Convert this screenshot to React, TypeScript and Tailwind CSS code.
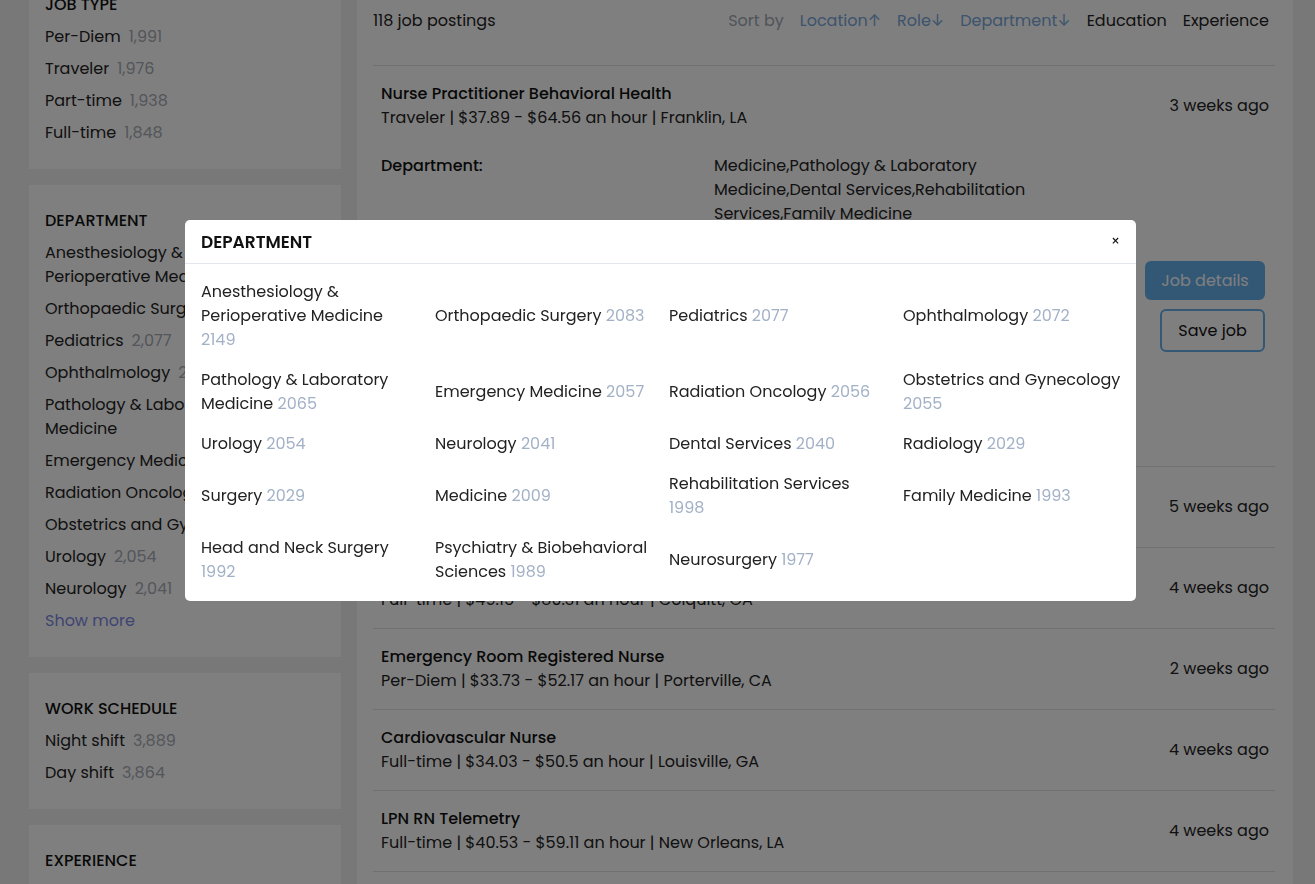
const jobTypes = [
  ['Per-Diem', '1,991'],
  ['Traveler', '1,976'],
  ['Part-time', '1,938'],
  ['Full-time', '1,848'],
]

const sideDepartments = [
  ['Anesthesiology & Perioperative Medicine', '2,149'],
  ['Orthopaedic Surgery', '2,083'],
  ['Pediatrics', '2,077'],
  ['Ophthalmology', '2,072'],
  ['Pathology & Laboratory Medicine', '2,065'],
  ['Emergency Medicine', '2,057'],
  ['Radiation Oncology', '2,056'],
  ['Obstetrics and Gynecology', '2,055'],
  ['Urology', '2,054'],
  ['Neurology', '2,041'],
]

const schedules = [
  ['Night shift', '3,889'],
  ['Day shift', '3,864'],
]

const modalDepartments = [
  ['Anesthesiology & Perioperative Medicine', '2149'],
  ['Orthopaedic Surgery', '2083'],
  ['Pediatrics', '2077'],
  ['Ophthalmology', '2072'],
  ['Pathology & Laboratory Medicine', '2065'],
  ['Emergency Medicine', '2057'],
  ['Radiation Oncology', '2056'],
  ['Obstetrics and Gynecology', '2055'],
  ['Urology', '2054'],
  ['Neurology', '2041'],
  ['Dental Services', '2040'],
  ['Radiology', '2029'],
  ['Surgery', '2029'],
  ['Medicine', '2009'],
  ['Rehabilitation Services', '1998'],
  ['Family Medicine', '1993'],
  ['Head and Neck Surgery', '1992'],
  ['Psychiatry & Biobehavioral Sciences', '1989'],
  ['Neurosurgery', '1977'],
]

const jobs = [
  { title: 'Registered Nurse Med Surg', type: 'Part-time', pay: '$36.12 - $58.40 an hour', place: 'Shreveport, LA', ago: '5 weeks ago' },
  { title: 'Registered Nurse ICU', type: 'Full-time', pay: '$49.15 - $80.31 an hour', place: 'Colquitt, GA', ago: '4 weeks ago' },
  { title: 'Emergency Room Registered Nurse', type: 'Per-Diem', pay: '$33.73 - $52.17 an hour', place: 'Porterville, CA', ago: '2 weeks ago' },
  { title: 'Cardiovascular Nurse', type: 'Full-time', pay: '$34.03 - $50.5 an hour', place: 'Louisville, GA', ago: '4 weeks ago' },
  { title: 'LPN RN Telemetry', type: 'Full-time', pay: '$40.53 - $59.11 an hour', place: 'New Orleans, LA', ago: '4 weeks ago' },
  { title: 'Operating Room Nurse', type: 'Traveler', pay: '$38.20 - $61.75 an hour', place: 'Austin, TX', ago: '1 week ago' },
]

function FilterCard({ title, items, more }: { title: string; items: string[][]; more?: boolean }) {
  return (
    <div className="bg-white px-4 py-6">
      <h3 className="text-base leading-6 font-medium uppercase text-[#111]">{title}</h3>
      <ul className="mt-2 flex flex-col gap-2">
        {items.map(([name, count]) => (
          <li key={name} className="flex items-start gap-2 text-base leading-6 text-[#222]">
            <span>{name}</span>
            <span className="shrink-0 text-[#a6acb4]">{count}</span>
          </li>
        ))}
      </ul>
      {more && <div className="mt-2 text-base leading-6 text-[#7f89e6]">Show more</div>}
    </div>
  )
}

function JobRow({ job }: { job: (typeof jobs)[number] }) {
  return (
    <div className="flex items-center justify-between border-b border-[#dee2e6] py-4 pl-2 pr-[6px]">
      <div>
        <div className="text-base leading-6 font-medium text-[#111]">{job.title}</div>
        <div className="text-base leading-6 text-[#222]">
          {job.type} | {job.pay} | {job.place}
        </div>
      </div>
      <div className="text-base leading-6 text-[#222]">{job.ago}</div>
    </div>
  )
}

export default function App() {
  return (
    <div className="relative h-screen overflow-hidden bg-[#f0f0f0] font-['Poppins','Inter',sans-serif]">
      <div className="-mt-[31px] flex items-start gap-4 pl-[29px] pr-[22px]">
        {/* sidebar filters */}
        <aside className="flex w-[312px] shrink-0 flex-col gap-4">
          <FilterCard title="Job type" items={jobTypes} />
          <FilterCard title="Department" items={sideDepartments} more />
          <FilterCard title="Work schedule" items={schedules} />
          <FilterCard title="Experience" items={[['Entry level', '2,140'], ['Mid level', '1,980']]} />
        </aside>

        {/* job list */}
        <main className="flex-1 bg-white pl-4 pr-[18px] pt-[40px]">
          <div className="flex items-center justify-between pr-[6px] text-base leading-6">
            <span className="text-[#222]">118 job postings</span>
            <div className="flex items-center gap-4">
              <span className="text-[#a0a8b4]">Sort by</span>
              <span className="text-[#78a8da]">Location↑</span>
              <span className="text-[#78a8da]">Role↓</span>
              <span className="text-[#78a8da]">Department↓</span>
              <span className="text-[#222]">Education</span>
              <span className="text-[#222]">Experience</span>
            </div>
          </div>
          <div className="mt-[32px] border-t border-[#dee2e6]" />

          <div className="border-b border-[#dee2e6] pt-4 pb-[114px] pl-2 pr-[6px]">
            <div className="flex items-center justify-between">
              <div>
                <div className="text-base leading-6 font-medium text-[#111]">Nurse Practitioner Behavioral Health</div>
                <div className="text-base leading-6 text-[#222]">Traveler | $37.89 - $64.56 an hour | Franklin, LA</div>
              </div>
              <div className="text-base leading-6 text-[#222]">3 weeks ago</div>
            </div>
            <div className="mt-6 grid grid-cols-[333px_320px] text-base leading-6">
              <div className="font-medium text-[#111]">Department:</div>
              <div className="text-[#222]">
                Medicine,Pathology &amp; Laboratory Medicine,Dental Services,Rehabilitation Services,Family Medicine
              </div>
            </div>
            <div className="mt-[35px] flex flex-col items-end gap-[9px] pr-[4px]">
              <button className="h-[39px] w-[120px] rounded-md bg-[#66b0ec] text-base text-white">Job details</button>
              <button className="h-[43px] w-[105px] rounded-md border-2 border-[#66b0ec] text-base text-[#111]">
                Save job
              </button>
            </div>
          </div>

          {jobs.map((job) => (
            <JobRow key={job.title} job={job} />
          ))}
        </main>
      </div>

      {/* modal */}
      <div className="fixed inset-0 bg-black/50" />
      <div className="fixed inset-0 flex items-start justify-center pt-[220px] pl-[6px]">
        <div className="w-[951px] overflow-hidden rounded-[5px] bg-white">
          <div className="flex items-center justify-between border-b border-[#e3e6ec] pt-[10px] pb-[9px] pl-4 pr-4">
            <h2 className="text-[17px] leading-6 font-semibold uppercase text-[#111]">Department</h2>
            <button className="-mt-[2px] text-sm leading-none text-[#111]">×</button>
          </div>
          <div className="grid grid-cols-[repeat(4,234px)] items-center gap-y-4 px-4 pt-4 pb-[17px]">
            {modalDepartments.map(([name, count]) => (
              <div key={name} className="pr-4 text-base leading-6 text-[#222]">
                {name} <span className="text-[#a3b1c6]">{count}</span>
              </div>
            ))}
          </div>
        </div>
      </div>
    </div>
  )
}
